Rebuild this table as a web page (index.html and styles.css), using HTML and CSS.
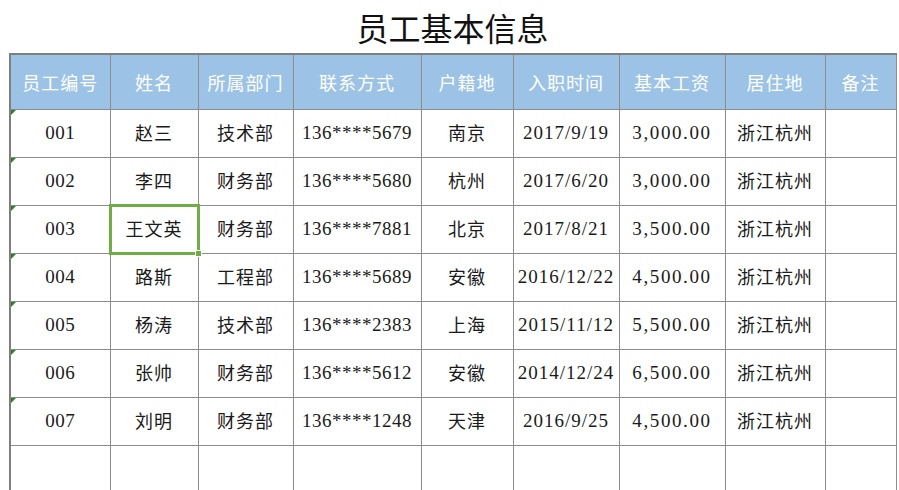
FILE: index.html
```html
<!DOCTYPE html>
<html lang="zh-CN">
<head>
<meta charset="utf-8">
<link rel="stylesheet" href="styles.css">
</head>
<body>
<div class="sheet">
  <h1 class="title">员工基本信息</h1>
  <table class="grid">
    <colgroup>
      <col class="c1"><col class="c2"><col class="c3"><col class="c4"><col class="c5"><col class="c6"><col class="c7"><col class="c8"><col class="c9">
    </colgroup>
    <thead>
      <tr><th>员工编号</th><th>姓名</th><th>所属部门</th><th>联系方式</th><th>户籍地</th><th>入职时间</th><th>基本工资</th><th>居住地</th><th>备注</th></tr>
    </thead>
    <tbody>
      <tr><td class="num flag">001</td><td>赵三</td><td>技术部</td><td class="num">136****5679</td><td>南京</td><td class="num date">2017/9/19</td><td class="num money">3,000.00</td><td>浙江杭州</td><td></td></tr>
      <tr><td class="num flag">002</td><td>李四</td><td>财务部</td><td class="num">136****5680</td><td>杭州</td><td class="num date">2017/6/20</td><td class="num money">3,000.00</td><td>浙江杭州</td><td></td></tr>
      <tr><td class="num flag">003</td><td class="selected">王文英<span class="sel-box"></span><span class="sel-handle"></span></td><td>财务部</td><td class="num">136****7881</td><td>北京</td><td class="num date">2017/8/21</td><td class="num money">3,500.00</td><td>浙江杭州</td><td></td></tr>
      <tr><td class="num flag">004</td><td>路斯</td><td>工程部</td><td class="num">136****5689</td><td>安徽</td><td class="num date">2016/12/22</td><td class="num money">4,500.00</td><td>浙江杭州</td><td></td></tr>
      <tr><td class="num flag">005</td><td>杨涛</td><td>技术部</td><td class="num">136****2383</td><td>上海</td><td class="num date">2015/11/12</td><td class="num money">5,500.00</td><td>浙江杭州</td><td></td></tr>
      <tr><td class="num flag">006</td><td>张帅</td><td>财务部</td><td class="num">136****5612</td><td>安徽</td><td class="num date">2014/12/24</td><td class="num money">6,500.00</td><td>浙江杭州</td><td></td></tr>
      <tr><td class="num flag">007</td><td>刘明</td><td>财务部</td><td class="num">136****1248</td><td>天津</td><td class="num date">2016/9/25</td><td class="num money">4,500.00</td><td>浙江杭州</td><td></td></tr>
      <tr><td></td><td></td><td></td><td></td><td></td><td></td><td></td><td></td><td></td></tr>
    </tbody>
  </table>
</div>
</body>
</html>
```
FILE: styles.css
```css
html, body {
  margin: 0;
  padding: 0;
  background: #ffffff;
}
body {
  font-family: "Noto Sans CJK SC", "Liberation Sans", sans-serif;
  color: #1a1a1a;
  overflow: hidden;
}
.sheet {
  padding-left: 9px;
  width: 887px;
}
.title {
  margin: 0;
  height: 53px;
  line-height: 55px;
  text-align: center;
  font-size: 32px;
  font-weight: 400;
  color: #111111;
}
.grid {
  border-collapse: collapse;
  table-layout: fixed;
  width: 887px;
}
.c1 { width: 100px; }
.c2 { width: 88px; }
.c3 { width: 95px; }
.c4 { width: 128px; }
.c5 { width: 92px; }
.c6 { width: 106px; }
.c7 { width: 106px; }
.c8 { width: 100px; }
.c9 { width: 71px; }
.grid th, .grid td {
  border: 1px solid #8c8c8c;
  padding: 0;
  text-align: center;
  white-space: nowrap;
  overflow: visible;
}
.grid th {
  height: 53px;
  background: #9cc3e6;
  color: #ffffff;
  font-weight: 400;
  font-size: 18px;
  letter-spacing: 1px;
  border-top: 2px solid #7f7f7f;
  padding-bottom: 1px;
}
.grid th:first-child, .grid td:first-child {
  border-left: 2px solid #7f7f7f;
}
.grid td {
  height: 44px;
  font-size: 18px;
  letter-spacing: 1px;
  position: relative;
  padding-bottom: 3px;
}
.grid td.num {
  font-family: "Liberation Serif", "Noto Sans CJK SC", serif;
  font-size: 19px;
  letter-spacing: 0.5px;
  padding-bottom: 1px;
  height: 46px;
}
.grid td.date {
  letter-spacing: 1px;
}
.grid td.money {
  letter-spacing: 1.6px;
}
.grid td.flag::before {
  content: "";
  position: absolute;
  left: 0;
  top: 0;
  width: 0;
  height: 0;
  border-top: 5px solid #2e7d32;
  border-right: 5px solid transparent;
}
.sel-box {
  position: absolute;
  z-index: 2;
  left: -2px;
  top: -2px;
  right: -2px;
  bottom: -2px;
  border: 3px solid #70ad47;
}
.sel-handle {
  position: absolute;
  z-index: 3;
  right: -4px;
  bottom: -4px;
  width: 5px;
  height: 5px;
  background: #70ad47;
  border: 1px solid #ffffff;
}
```
